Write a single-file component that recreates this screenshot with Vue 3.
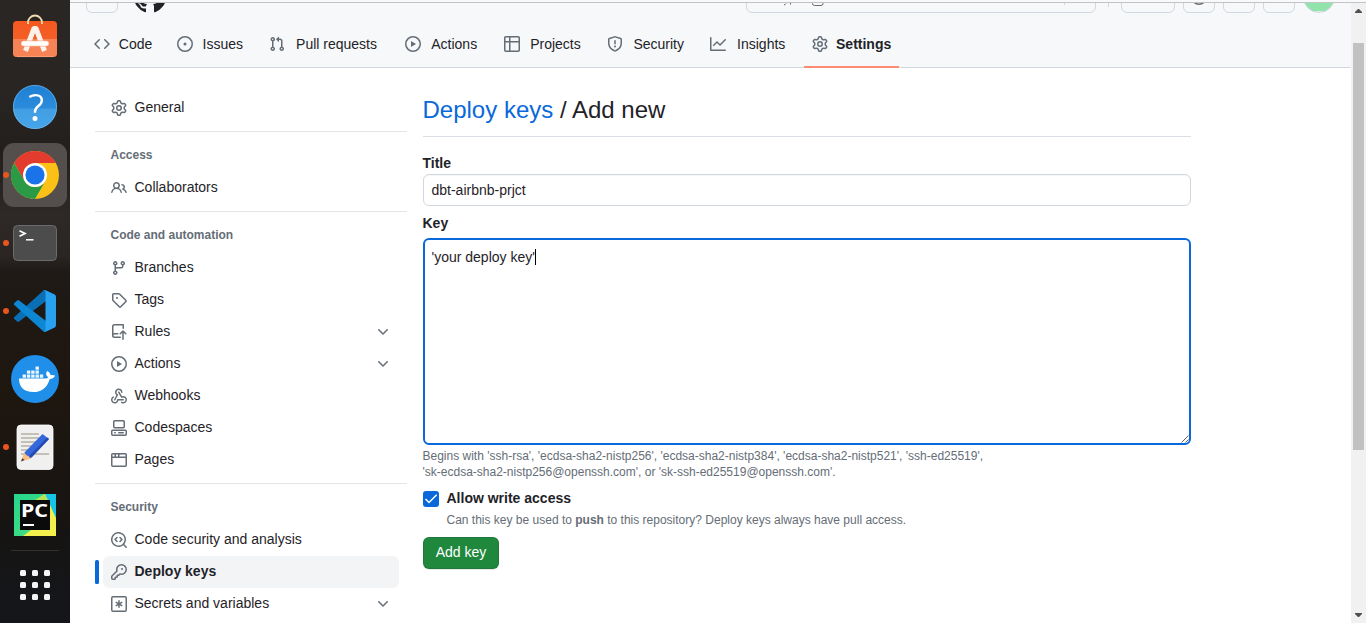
<script setup>
const icons = {
  code: 'm11.28 3.22 4.25 4.25a.75.75 0 0 1 0 1.06l-4.25 4.25a.749.749 0 0 1-1.275-.326.749.749 0 0 1 .215-.734L13.94 8l-3.72-3.72a.749.749 0 0 1 .326-1.275.749.749 0 0 1 .734.215Zm-6.56 0a.751.751 0 0 1 1.042.018.751.751 0 0 1 .018 1.042L2.06 8l3.72 3.72a.749.749 0 0 1-.326 1.275.749.749 0 0 1-.734-.215L.47 8.53a.75.75 0 0 1 0-1.06Z',
  issue: 'M8 9.5a1.5 1.5 0 1 0 0-3 1.5 1.5 0 0 0 0 3ZM8 0a8 8 0 1 1 0 16A8 8 0 0 1 8 0ZM1.5 8a6.5 6.5 0 1 0 13 0 6.5 6.5 0 0 0-13 0Z',
  pull: 'M1.5 3.25a2.25 2.25 0 1 1 3 2.122v5.256a2.251 2.251 0 1 1-1.5 0V5.372A2.25 2.25 0 0 1 1.5 3.25Zm5.677-.177L9.573.677A.25.25 0 0 1 10 .854V2.5h1A2.5 2.5 0 0 1 13.5 5v5.628a2.251 2.251 0 1 1-1.5 0V5a1 1 0 0 0-1-1h-1v1.646a.25.25 0 0 1-.427.177L7.177 3.427a.25.25 0 0 1 0-.354ZM3.75 2.5a.75.75 0 1 0 0 1.5.75.75 0 0 0 0-1.5Zm0 9.5a.75.75 0 1 0 0 1.5.75.75 0 0 0 0-1.5Zm8.25.75a.75.75 0 1 0 1.5 0 .75.75 0 0 0-1.5 0Z',
  play: 'M8 0a8 8 0 1 1 0 16A8 8 0 0 1 8 0ZM1.5 8a6.5 6.5 0 1 0 13 0 6.5 6.5 0 0 0-13 0Zm4.879-2.773 4.264 2.559a.25.25 0 0 1 0 .428l-4.264 2.559A.25.25 0 0 1 6 10.559V5.442a.25.25 0 0 1 .379-.215Z',
  table: 'M0 1.75C0 .784.784 0 1.75 0h12.5C15.216 0 16 .784 16 1.75v12.5A1.75 1.75 0 0 1 14.25 16H1.75A1.75 1.75 0 0 1 0 14.25ZM6.5 6.5v8h7.75a.25.25 0 0 0 .25-.25V6.5Zm8-1.5V1.75a.25.25 0 0 0-.25-.25H6.5V5Zm-13 1.5v7.75c0 .138.112.25.25.25H5v-8ZM5 5V1.5H1.75a.25.25 0 0 0-.25.25V5Z',
  shield: 'M7.467.133a1.748 1.748 0 0 1 1.066 0l5.25 1.68A1.75 1.75 0 0 1 15 3.48V7c0 1.566-.32 3.182-1.303 4.682-.983 1.498-2.585 2.813-5.032 3.855a1.697 1.697 0 0 1-1.33 0c-2.447-1.042-4.049-2.357-5.032-3.855C1.32 10.182 1 8.566 1 7V3.48a1.75 1.75 0 0 1 1.217-1.667Zm.61 1.429a.25.25 0 0 0-.153 0l-5.25 1.68a.25.25 0 0 0-.174.238V7c0 1.358.275 2.666 1.057 3.86.784 1.194 2.121 2.34 4.366 3.297a.196.196 0 0 0 .154 0c2.245-.956 3.582-2.104 4.366-3.298C13.225 9.666 13.5 8.36 13.5 7V3.48a.251.251 0 0 0-.174-.237l-5.25-1.68ZM8.75 4.75v3a.75.75 0 0 1-1.5 0v-3a.75.75 0 0 1 1.5 0ZM9 10.5a1 1 0 1 1-2 0 1 1 0 0 1 2 0Z',
  graph: 'M1.5 1.75V13.5h13.75a.75.75 0 0 1 0 1.5H.75a.75.75 0 0 1-.75-.75V1.75a.75.75 0 0 1 1.5 0Zm14.28 2.53-5.25 5.25a.75.75 0 0 1-1.06 0L7 7.06 4.28 9.78a.751.751 0 0 1-1.042-.018.751.751 0 0 1-.018-1.042l3.25-3.25a.75.75 0 0 1 1.06 0L10 7.94l4.72-4.72a.751.751 0 0 1 1.042.018.751.751 0 0 1 .018 1.042Z',
  gear: 'M8 0a8.2 8.2 0 0 1 .701.031C9.444.095 9.99.645 10.16 1.29l.288 1.107c.018.066.079.158.212.224.231.114.454.243.668.386.123.082.233.09.299.071l1.103-.303c.644-.176 1.392.021 1.82.63.27.385.506.792.704 1.218.315.675.111 1.422-.364 1.891l-.814.806c-.049.048-.098.147-.088.294.016.257.016.515 0 .772-.01.147.038.246.088.294l.814.806c.475.469.679 1.216.364 1.891a7.977 7.977 0 0 1-.704 1.217c-.428.61-1.176.807-1.82.63l-1.102-.302c-.067-.019-.177-.011-.3.071a5.909 5.909 0 0 1-.668.386c-.133.066-.194.158-.211.224l-.29 1.106c-.168.646-.715 1.196-1.458 1.26a8.006 8.006 0 0 1-1.402 0c-.743-.064-1.289-.614-1.458-1.26l-.289-1.106c-.018-.066-.079-.158-.212-.224a5.738 5.738 0 0 1-.668-.386c-.123-.082-.233-.09-.299-.071l-1.103.303c-.644.176-1.392-.021-1.82-.63a8.12 8.12 0 0 1-.704-1.218c-.315-.675-.111-1.422.363-1.891l.815-.806c.05-.048.098-.147.088-.294a6.214 6.214 0 0 1 0-.772c.01-.147-.038-.246-.088-.294l-.815-.806C.635 6.045.431 5.298.746 4.623a7.92 7.92 0 0 1 .704-1.217c.428-.61 1.176-.807 1.82-.63l1.102.302c.067.019.177.011.3-.071.214-.143.437-.272.668-.386.133-.066.194-.158.211-.224l.29-1.106C6.009.645 6.556.095 7.299.03 7.53.01 7.764 0 8 0Zm-.571 1.525c-.036.003-.108.036-.137.146l-.289 1.105c-.147.561-.549.967-.998 1.189-.173.086-.34.183-.5.29-.417.278-.97.423-1.529.27l-1.103-.303c-.109-.03-.175.016-.195.045-.22.312-.412.644-.573.99-.014.031-.021.11.059.19l.815.806c.411.406.562.957.53 1.456a4.709 4.709 0 0 0 0 .582c.032.499-.119 1.05-.53 1.456l-.815.806c-.081.08-.073.159-.059.19.162.346.353.677.573.989.02.03.085.076.195.046l1.102-.303c.56-.153 1.113-.008 1.53.27.161.107.328.204.501.29.447.222.85.629.997 1.189l.289 1.105c.029.109.101.143.137.146a6.6 6.6 0 0 0 1.142 0c.036-.003.108-.036.137-.146l.289-1.105c.147-.561.549-.967.998-1.189.173-.086.34-.183.5-.29.417-.278.97-.423 1.529-.27l1.103.303c.109.029.175-.016.195-.045.22-.313.411-.644.573-.99.014-.031.021-.11-.059-.19l-.815-.806c-.411-.406-.562-.957-.53-1.456a4.709 4.709 0 0 0 0-.582c-.032-.499.119-1.05.53-1.456l.815-.806c.081-.08.073-.159.059-.19a6.464 6.464 0 0 0-.573-.989c-.02-.03-.085-.076-.195-.046l-1.102.303c-.56.153-1.113.008-1.53-.27a4.44 4.44 0 0 0-.501-.29c-.447-.222-.85-.629-.997-1.189l-.289-1.105c-.029-.11-.101-.143-.137-.146a6.6 6.6 0 0 0-1.142 0ZM11 8a3 3 0 1 1-6 0 3 3 0 0 1 6 0ZM9.5 8a1.5 1.5 0 1 0-3.001.001A1.5 1.5 0 0 0 9.5 8Z',
  people: 'M2 5.5a3.5 3.5 0 1 1 5.898 2.549 5.508 5.508 0 0 1 3.034 4.084.75.75 0 1 1-1.482.235 4 4 0 0 0-7.9 0 .75.75 0 0 1-1.482-.236A5.507 5.507 0 0 1 3.102 8.05 3.493 3.493 0 0 1 2 5.5ZM11 4a3.001 3.001 0 0 1 2.22 5.018 5.01 5.01 0 0 1 2.56 3.012.749.749 0 0 1-.885.954.752.752 0 0 1-.549-.514 3.507 3.507 0 0 0-2.522-2.372.75.75 0 0 1-.574-.73v-.352a.75.75 0 0 1 .416-.672A1.5 1.5 0 0 0 11 5.5.75.75 0 0 1 11 4Zm-5.5-.5a2 2 0 1 0-.001 3.999A2 2 0 0 0 5.5 3.5Z',
  branch: 'M9.5 3.25a2.25 2.25 0 1 1 3 2.122V6A2.5 2.5 0 0 1 10 8.5H6a1 1 0 0 0-1 1v1.128a2.251 2.251 0 1 1-1.5 0V5.372a2.25 2.25 0 1 1 1.5 0v1.836A2.493 2.493 0 0 1 6 7h4a1 1 0 0 0 1-1v-.628A2.25 2.25 0 0 1 9.5 3.25Zm-6 0a.75.75 0 1 0 1.5 0 .75.75 0 0 0-1.5 0Zm8.25-.75a.75.75 0 1 0 0 1.5.75.75 0 0 0 0-1.5ZM4.25 12a.75.75 0 1 0 0 1.5.75.75 0 0 0 0-1.5Z',
  tag: 'M1 7.775V2.75C1 1.784 1.784 1 2.75 1h5.025c.464 0 .91.184 1.238.513l6.25 6.25a1.75 1.75 0 0 1 0 2.474l-5.026 5.026a1.75 1.75 0 0 1-2.474 0l-6.25-6.25A1.752 1.752 0 0 1 1 7.775Zm1.5 0c0 .066.026.13.073.177l6.25 6.25a.25.25 0 0 0 .354 0l5.025-5.025a.25.25 0 0 0 0-.354l-6.25-6.25a.25.25 0 0 0-.177-.073H2.75a.25.25 0 0 0-.25.25ZM6 5a1 1 0 1 1 0 2 1 1 0 0 1 0-2Z',
  repoPush: 'M1 2.5A2.5 2.5 0 0 1 3.5 0h8.75a.75.75 0 0 1 .75.75v3.5a.75.75 0 0 1-1.5 0V1.5h-8a1 1 0 0 0-1 1v6.708A2.493 2.493 0 0 1 3.5 9h3.25a.75.75 0 0 1 0 1.5H3.5a1 1 0 0 0 0 2h5.75a.75.75 0 0 1 0 1.5H3.5A2.5 2.5 0 0 1 1 11.5Zm13.23 7.79-1.48-1.484V15.25a.75.75 0 0 1-1.5 0V8.807L9.77 10.29a.75.75 0 1 1-1.06-1.061l2.505-2.504a1.1 1.1 0 0 1 1.57 0L15.29 9.23a.751.751 0 0 1-.018 1.042.751.751 0 0 1-1.042.018Z',
  webhook: 'M5.5 4.25a2.25 2.25 0 0 1 4.5 0 .75.75 0 0 0 1.5 0 3.75 3.75 0 1 0-6.14 2.889l-2.272 4.258a.75.75 0 0 0 1.324.706L7 7.25a.75.75 0 0 0-.309-1.015A2.25 2.25 0 0 1 5.5 4.25ZM7.364 3.607a.75.75 0 0 1 1.03.257l2.608 4.349a3.75 3.75 0 1 1-.628 6.785.75.75 0 0 1 .752-1.299 2.25 2.25 0 1 0-.033-3.88.75.75 0 0 1-1.03-.256L7.107 4.636a.75.75 0 0 1 .257-1.03ZM2.9 8.776A.75.75 0 0 1 2.625 9.8 2.25 2.25 0 1 0 6 11.75a.75.75 0 0 1 .75-.751h5.5a.75.75 0 0 1 0 1.5H7.425a3.751 3.751 0 1 1-5.55-3.998.75.75 0 0 1 1.024.274Z',
  codespaces: 'M0 11.25c0-.966.784-1.75 1.75-1.75h12.5c.966 0 1.75.784 1.75 1.75v3A1.75 1.75 0 0 1 14.25 16H1.75A1.75 1.75 0 0 1 0 14.25Zm2-9.5C2 .784 2.784 0 3.75 0h8.5C13.216 0 14 .784 14 1.75v5a1.75 1.75 0 0 1-1.75 1.75h-8.5A1.75 1.75 0 0 1 2 6.75Zm1.75-.25a.25.25 0 0 0-.25.25v5c0 .138.112.25.25.25h8.5a.25.25 0 0 0 .25-.25v-5a.25.25 0 0 0-.25-.25Zm-2 9.5a.25.25 0 0 0-.25.25v3c0 .138.112.25.25.25h12.5a.25.25 0 0 0 .25-.25v-3a.25.25 0 0 0-.25-.25ZM7 12.75a.75.75 0 0 1 .75-.75h4.5a.75.75 0 0 1 0 1.5h-4.5a.75.75 0 0 1-.75-.75Zm-4 0a.75.75 0 0 1 .75-.75h.5a.75.75 0 0 1 0 1.5h-.5a.75.75 0 0 1-.75-.75Z',
  browser: 'M0 2.75C0 1.784.784 1 1.75 1h12.5c.966 0 1.75.784 1.75 1.75v10.5A1.75 1.75 0 0 1 14.25 15H1.75A1.75 1.75 0 0 1 0 13.25ZM14.5 6h-13v7.25c0 .138.112.25.25.25h12.5a.25.25 0 0 0 .25-.25Zm-6-3.5v2h6V2.75a.25.25 0 0 0-.25-.25ZM5 2.5v2h2v-2Zm-3.25 0a.25.25 0 0 0-.25.25V4.5h2v-2Z',
  codescan: 'M8.47 4.97a.75.75 0 0 0 0 1.06L9.94 7.5 8.47 8.97a.75.75 0 1 0 1.06 1.06l2-2a.75.75 0 0 0 0-1.06l-2-2a.75.75 0 0 0-1.06 0ZM6.53 6.03a.75.75 0 0 0-1.06-1.06l-2 2a.75.75 0 0 0 0 1.06l2 2a.75.75 0 1 0 1.06-1.06L5.06 7.5l1.47-1.47ZM12.246 13.307a7.501 7.501 0 1 1 1.06-1.06l2.474 2.473a.749.749 0 0 1-.326 1.275.749.749 0 0 1-.734-.215ZM1.5 7.5a6.002 6.002 0 0 0 3.608 5.504 6.002 6.002 0 0 0 6.486-1.117.748.748 0 0 1 .292-.293A6 6 0 1 0 1.5 7.5Z',
  key: 'M10.5 0a5.499 5.499 0 1 1-1.288 10.848l-.932.932a.749.749 0 0 1-.53.22H7v.75a.749.749 0 0 1-.22.53l-.5.5a.749.749 0 0 1-.53.22H5v.75a.749.749 0 0 1-.22.53l-.5.5a.749.749 0 0 1-.53.22h-2A1.75 1.75 0 0 1 0 14.25v-2c0-.199.079-.389.22-.53l4.932-4.932A5.5 5.5 0 0 1 10.5 0Zm-4 5.5c-.001.431.069.86.205 1.269a.75.75 0 0 1-.181.768L1.5 12.56v1.69c0 .138.112.25.25.25h1.69l.06-.06v-1.19a.75.75 0 0 1 .75-.75h1.19l.06-.06v-1.19a.75.75 0 0 1 .75-.75h1.19l1.023-1.025a.75.75 0 0 1 .768-.18A4 4 0 1 0 6.5 5.5ZM11 6a1 1 0 1 1 0-2 1 1 0 0 1 0 2Z',
  asterisk: 'M0 2A2 2 0 0 1 2 0h12a2 2 0 0 1 2 2v12a2 2 0 0 1-2 2H2a2 2 0 0 1-2-2ZM2 1.5a.5.5 0 0 0-.5.5v12a.5.5 0 0 0 .5.5h12a.5.5 0 0 0 .5-.5V2a.5.5 0 0 0-.5-.5ZM7.25 4.200h1.5v2.500l2.150-1.250.750 1.300L9.500 8l2.150 1.250-.750 1.300-2.150-1.250v2.500h-1.500V9.300l-2.150 1.250-.750-1.300L6.500 8 4.350 6.750l.750-1.300 2.150 1.250Z',
  chevron: 'M12.78 5.22a.749.749 0 0 1 0 1.06l-4.25 4.25a.749.749 0 0 1-1.06 0L3.22 6.28a.749.749 0 1 1 1.06-1.06L8 8.939l3.72-3.719a.749.749 0 0 1 1.06 0Z',
  mark: 'M8 0c4.42 0 8 3.58 8 8a8.013 8.013 0 0 1-5.45 7.59c-.4.08-.55-.17-.55-.38 0-.27.01-1.13.01-2.2 0-.75-.25-1.23-.54-1.48 1.78-.2 3.65-.88 3.65-3.95 0-.88-.31-1.59-.82-2.15.08-.2.36-1.02-.08-2.12 0 0-.67-.22-2.2.82-.64-.18-1.32-.27-2-.27-.68 0-1.36.09-2 .27-1.53-1.03-2.2-.82-2.2-.82-.44 1.1-.16 1.92-.08 2.12-.51.56-.82 1.28-.82 2.15 0 3.06 1.86 3.75 3.64 3.95-.23.2-.44.55-.51 1.07-.46.21-1.61.55-2.33-.66-.15-.24-.6-.83-1.23-.82-.67.01-.27.38.01.53.34.19.73.9.82 1.13.16.45.68 1.31 2.69.94 0 .67.01 1.3.01 1.49 0 .21-.15.45-.55.38A7.995 7.995 0 0 1 0 8c0-4.42 3.58-8 8-8Z',
}

const tabs = [
  { label: 'Code', icon: 'code' },
  { label: 'Issues', icon: 'issue' },
  { label: 'Pull requests', icon: 'pull' },
  { label: 'Actions', icon: 'play' },
  { label: 'Projects', icon: 'table' },
  { label: 'Security', icon: 'shield' },
  { label: 'Insights', icon: 'graph' },
  { label: 'Settings', icon: 'gear', selected: true },
]

const groups = [
  { items: [{ label: 'General', icon: 'gear' }] },
  { title: 'Access', items: [{ label: 'Collaborators', icon: 'people' }] },
  {
    title: 'Code and automation',
    items: [
      { label: 'Branches', icon: 'branch' },
      { label: 'Tags', icon: 'tag' },
      { label: 'Rules', icon: 'repoPush', more: true },
      { label: 'Actions', icon: 'play', more: true },
      { label: 'Webhooks', icon: 'webhook' },
      { label: 'Codespaces', icon: 'codespaces' },
      { label: 'Pages', icon: 'browser' },
    ],
  },
  {
    title: 'Security',
    items: [
      { label: 'Code security and analysis', icon: 'codescan' },
      { label: 'Deploy keys', icon: 'key', active: true },
      { label: 'Secrets and variables', icon: 'asterisk', more: true },
    ],
  },
]
</script>

<template>
  <div class="screen">
    <aside class="dock">
      <div class="app">
        <svg width="64" height="64" viewBox="3 7 64 64">
          <defs>
            <linearGradient id="bag" x1="0" y1="0" x2="0" y2="1"><stop offset="0" stop-color="#f4581f" /><stop offset="1" stop-color="#f2662f" /></linearGradient>
          </defs>
          <rect x="13" y="21" width="44" height="36" rx="4" fill="url(#bag)" />
          <path d="M13 39h44v14a4 4 0 0 1-4 4H17a4 4 0 0 1-4-4Z" fill="#f58355" />
          <path d="M17 56.6h36" stroke="#f9a583" stroke-width=".8" />
          <path d="M28 24v-1.5a7 7 0 0 1 14 0V24" fill="none" stroke="#f3dcae" stroke-width="1.8" />
          <path d="M25.5 51 34 28.5h2L44.500 51" fill="none" stroke="#fdf1ec" stroke-width="5" stroke-linejoin="round" />
          <rect x="21" y="40.800" width="28" height="5.400" rx="2.700" fill="#fff" stroke="#f58355" stroke-width=".5" />
        </svg>
      </div>
      <div class="app">
        <svg width="64" height="64" viewBox="3 75 64 64">
          <defs>
            <linearGradient id="help" x1="0" y1="0" x2="0" y2="1"><stop offset="0" stop-color="#1f7fd4" /><stop offset=".53" stop-color="#2b8cdc" /><stop offset=".54" stop-color="#429ee2" /><stop offset="1" stop-color="#45a5ea" /></linearGradient>
          </defs>
          <circle cx="35" cy="107" r="22" fill="url(#help)" />
          <circle cx="35" cy="107" r="21.600" fill="none" stroke="#7fc0ee" stroke-width=".6" />
          <path d="M29.300 97c2-1.300 4.200-1.900 6.200-1.900 4.200 0 6.300 2.100 6.300 5.300 0 5.400-6.800 5.800-6.800 11v1.400" fill="none" stroke="#fff" stroke-width="2.400" />
          <circle cx="35" cy="118.500" r="2.500" fill="#fff" />
        </svg>
      </div>
      <div class="app current running">
        <svg width="64" height="64" viewBox="3 143 64 64">
          <circle cx="35" cy="175" r="24" fill="#fbc116" />
          <path d="M14.200 163A24 24 0 0 1 55.800 163H35L24.600 181Z" fill="#e33b2e" />
          <path d="M14.200 163A24 24 0 0 0 35 199L45.400 181A12 12 0 0 1 24.600 181Z" fill="#2a9a47" />
          <circle cx="35" cy="175" r="12" fill="#fff" />
          <circle cx="35" cy="175" r="9.600" fill="#1a73e8" />
        </svg>
      </div>
      <div class="app running">
        <svg width="64" height="64" viewBox="3 211 64 64">
          <rect x="13.500" y="225.500" width="43" height="35" rx="4" fill="#4c4c4c" stroke="#6c6c6c" />
          <path d="m19.500 230.800 5.500 2.700-5.500 2.700" fill="none" stroke="#fff" stroke-width="1.700" />
          <path d="M26 239.800h7.500" stroke="#fff" stroke-width="1.500" />
        </svg>
      </div>
      <div class="app running">
        <svg width="42" height="42" viewBox="0 0 100 100">
          <path fill="#0a6fb5" d="M96.500 10.800 75.900.9a6.200 6.200 0 0 0-7.100 1.200L1.400 63.600a4.200 4.200 0 0 0 0 6.100l5.500 5a4.200 4.200 0 0 0 5.300.3L93.400 13.300c2.700-2 6.600-.1 6.600 3.300Z" />
          <path fill="#0d86d3" d="M96.500 89.200 75.900 99.100a6.200 6.200 0 0 1-7.100-1.200L1.400 36.400a4.200 4.200 0 0 1 0-6.100l5.500-5a4.200 4.200 0 0 1 5.300-.3l81.200 61.700c2.700 2 6.600.1 6.600-3.300Z" />
          <path fill="#27a1f0" d="M75.900 99.100a6.200 6.200 0 0 1-7.100-1.200 3.700 3.700 0 0 0 6.200-2.600V4.700a3.700 3.700 0 0 0-6.200-2.600 6.200 6.200 0 0 1 7.100-1.200l20.600 9.900a6.300 6.300 0 0 1 3.500 5.600v67.200a6.300 6.300 0 0 1-3.500 5.600Z" />
        </svg>
      </div>
      <div class="app">
        <svg width="64" height="64" viewBox="3 347 64 64">
          <circle cx="35" cy="379" r="24" fill="#1f8fea" />
          <path fill="#fff" d="M19 378.500h26c1.700 0 2.800-.5 3.300-1.300-2.400-1.500-2.900-3.700-1.200-6.200 2.200 1 3.200 2.500 3.400 4.100 1.900-.4 3.400-.2 4.600.6-.9 2-2.700 3.200-5.300 3.200-2.700 8.500-8 13.100-16.500 13.100-9.500 0-14.300-5-14.300-13.500Z" />
          <path fill="#e9f4fd" d="M22.600 374.400h3.400v3.400h-3.400ZM26.900 374.400h3.400v3.400h-3.400ZM31.200 374.400h3.400v3.400h-3.400ZM35.500 374.400h3.400v3.400h-3.400ZM39.800 374.400h3.400v3.400h-3.400ZM26.900 370.400h3.400v3.400h-3.400ZM31.200 370.400h3.400v3.400h-3.400ZM35.500 370.400h3.400v3.400h-3.400ZM35.500 366.400h3.400v3.400h-3.400Z" />
        </svg>
      </div>
      <div class="app running">
        <svg width="64" height="64" viewBox="3 415 64 64">
          <rect x="17" y="425" width="36" height="44.500" rx="4" fill="#f0f0f0" stroke="#fff" stroke-width=".8" />
          <path d="M21 434h18M21 438h21M21 442h17M21 446h14M21 450h11M21 454h28" stroke="#c4c0b6" stroke-width="1.800" />
          <path d="M21 461.500 24.500 452l7 6.500Z" fill="#f6bd84" />
          <path d="M21 461.500l1.300-3.300 2.200 1.900Z" fill="#3b3b3b" />
          <path d="m24.500 452.500 18-18.500 6.500 5-17.500 18.500c-1.300.3-2.300-.2-2.700-1.600-1.800 0-3.300-1.300-4.300-3.400Z" fill="#3568dc" />
          <path d="m29 456 18.300-18.600 1.700 1.600-17.500 18.500c-1.300.3-2.100-.3-2.500-1.500Z" fill="#254bb0" />
        </svg>
      </div>
      <div class="app">
        <svg width="64" height="64" viewBox="3 483 64 64">
          <defs>
            <linearGradient id="pc" x1="0" y1="0" x2="1" y2="1"><stop offset="0" stop-color="#25d78c" /><stop offset="1" stop-color="#4ddf7c" /></linearGradient>
          </defs>
          <rect x="14" y="494" width="42" height="42" fill="url(#pc)" />
          <path d="M45 494h11v24l-10-4Z" fill="#14c5e6" />
          <path d="M34 501 45 494 56 518v18H23l8-6Z" fill="#f3ef4d" />
          <path d="M34 501 45 494l2 6Z" fill="#b6e35c" />
          <rect x="20" y="500" width="30" height="30" fill="#0b0b0b" />
          <rect x="23" y="524" width="11" height="2" fill="#fff" />
          <text x="21" y="517" class="pc" textLength="27" lengthAdjust="spacingAndGlyphs">PC</text>
        </svg>
      </div>
      <div class="rule"></div>
      <div class="grid"><i v-for="n in 9" :key="n"></i></div>
    </aside>

    <div class="browser">
      <div class="edge"></div>
      <div class="window">
        <div class="page">
          <header class="header">
            <div class="topbar">
              <div class="box sq"></div>
              <svg class="mark" width="32" height="32" viewBox="0 0 16 16"><path :d="icons.mark" /></svg>
              <div class="box search">
                <svg width="350" height="32" viewBox="0 0 350 32">
                  <path d="M40 22.600q-.7 1.400-2 1.200M44.500 23.500v-2" stroke="#656d76" fill="none" />
                  <path d="M66.500 20v2.500q0 2 2 2h6.500q2 0 2-2V20" fill="none" stroke="#656d76" />
                  <path d="M318.500 8v16" stroke="#d0d7de" />
                </svg>
              </div>
              <div class="sep"></div>
              <div class="box wide"></div>
              <div class="box sq"><svg width="16" height="16" viewBox="0 0 16 16"><path :d="icons.issue" /></svg></div>
              <div class="box sq"></div>
              <div class="box sq"></div>
              <div class="avatar"></div>
            </div>
            <nav class="tabs">
              <a v-for="t in tabs" :key="t.label" class="tab" :class="{ selected: t.selected }">
                <svg class="icon" width="16" height="16" viewBox="0 0 16 16"><path :d="icons[t.icon]" /></svg>
                <span class="label" :data-label="t.label">{{ t.label }}</span>
              </a>
            </nav>
          </header>

          <div class="body">
            <nav class="side">
              <section v-for="(g, i) in groups" :key="i" class="group">
                <h3 v-if="g.title">{{ g.title }}</h3>
                <a v-for="it in g.items" :key="it.label" class="item" :class="{ active: it.active }">
                  <svg class="icon" width="16" height="16" viewBox="0 0 16 16"><path :d="icons[it.icon]" fill-rule="evenodd" /></svg>
                  <span>{{ it.label }}</span>
                  <svg v-if="it.more" class="icon more" width="16" height="16" viewBox="0 0 16 16"><path :d="icons.chevron" /></svg>
                </a>
              </section>
            </nav>

            <main class="main">
              <h2><a>Deploy keys</a> / Add new</h2>
              <label class="field-label">Title</label>
              <div class="input">dbt-airbnb-prjct</div>
              <label class="field-label key-label">Key</label>
              <div class="area">
                <span class="typed">'your deploy key'</span>
                <svg class="grip" width="8" height="8" viewBox="0 0 8 8"><path d="M.5 7.500 7.500.5M4.500 7.500l3-3" stroke="#555" stroke-width=".9" /></svg>
              </div>
              <p class="note">
                Begins with 'ssh-rsa', 'ecdsa-sha2-nistp256', 'ecdsa-sha2-nistp384', 'ecdsa-sha2-nistp521', 'ssh-ed25519',<br />'sk-ecdsa-sha2-nistp256@openssh.com', or 'sk-ssh-ed25519@openssh.com'.
              </p>
              <div class="check-row">
                <span class="check"><svg width="16" height="16" viewBox="0 0 16 16"><path d="m2.500 8 3.500 3.500 7.700-7.700" /></svg></span>
                <div>
                  <label class="check-label">Allow write access</label>
                  <p class="hint">Can this key be used to <b>push</b> to this repository? Deploy keys always have pull access.</p>
                </div>
              </div>
              <button class="submit" type="button">Add key</button>
            </main>
          </div>
        </div>
        <div class="scrollbar">
          <svg width="7" height="4" viewBox="0 0 7 4"><path d="M0 4V3L3 0h1l3 3v1Z" /></svg>
          <div class="thumb"></div>
          <svg class="down" width="7" height="4" viewBox="0 0 7 4"><path d="M0 0v1l3 3h1l3-3V0Z" /></svg>
        </div>
      </div>
    </div>
  </div>
</template>

<style>
html, body { margin: 0; overflow: hidden; background: #fff; }
</style>

<style scoped>
* { box-sizing: border-box; }
svg { display: block; flex: none; }
h2, h3, p { margin: 0; }

.screen {
  display: flex;
  width: 1366px;
  height: 623px;
  overflow: hidden;
  font-family: "Liberation Sans", Arial, sans-serif;
  font-size: 14px;
  line-height: 21px;
  color: #1f2328;
}

.dock {
  width: 70px;
  flex: none;
  display: flex;
  flex-direction: column;
  align-items: center;
  padding-top: 5px;
  background: linear-gradient(#2a2624 0, #292523 90px, #231f1d 150px, #2e2926 215px, #2b2624 255px, #1e1a17 272px, #1f1812 330px, #1e1710 400px, #1a1511 470px, #161412 530px, #14161a 600px, #14161a 620px);
}
.app {
  position: relative;
  width: 64px;
  height: 64px;
  margin: 2px 0;
  flex: none;
  display: flex;
  align-items: center;
  justify-content: center;
  border-radius: 11px;
}
.current { background: #544f4c; }
.running::before {
  content: "";
  position: absolute;
  left: 0;
  top: 29px;
  width: 6px;
  height: 6px;
  border-radius: 50%;
  background: #e95420;
}
.pc { font-family: "Noto Sans", "Open Sans", sans-serif; font-weight: 700; font-size: 18.500px; fill: #fff; }
.rule { width: 48px; height: 1px; background: #33312f; flex: none; margin-top: 1px; }
.grid { display: grid; grid-template-columns: repeat(3, 6px); gap: 6px; margin-top: 19px; }
.grid i { height: 6px; border-radius: 1.500px; background: #f4f4f4; }

.browser { width: 1296px; display: flex; flex-direction: column; }
.edge { height: 3px; flex: none; background: #f8f9fa; border-bottom: 1px solid #c3c3c3; }
.window { flex: 1; display: flex; min-height: 0; }
.page { width: 1281px; overflow: hidden; }

.header { background: #f6f8fa; height: 65px; box-shadow: inset 0 -1px #d0d7de; }
.topbar {
  height: 10px;
  display: flex;
  align-items: flex-end;
  gap: 8px;
  padding: 0 16px;
  overflow: hidden;
}
.box { height: 32px; border: 1px solid #d0d7de; border-radius: 6px; flex: none; display: flex; align-items: center; justify-content: center; }
.box svg { fill: #656d76; }
.sq { width: 32px; }
.wide { width: 54px; }
.mark { fill: #1f2328; margin-left: 8px; }
.search { width: 350px; margin-left: auto; }
.sep { width: 1px; height: 26px; margin: 0 4px 6px; background: #d0d7de; }
.avatar { width: 32px; height: 32px; flex: none; border-radius: 50%; border: 1px solid #d0d7de; background: linear-gradient(#8fe3ab 29px, #e3f3ea 29px); }

.tabs { display: flex; gap: 8px; padding: 7px 16px 0; }
.tab { display: flex; align-items: center; gap: 8px; height: 48px; padding: 2px 8px 0; border-bottom: 2px solid transparent; }
.selected { border-color: #fd8c73; font-weight: 700; }
.icon { fill: #656d76; }
.label { line-height: 20px; text-align: center; }
.label::before { content: attr(data-label); display: block; height: 0; overflow: hidden; visibility: hidden; font-weight: 700; }

.body { display: flex; gap: 16px; padding: 24px 0 0 24.500px; }
.side { width: 312px; flex: none; }
.group { padding: 0 8px; }
.group + .group { border-top: 1px solid #e3e6e9; margin-top: 7px; padding-top: 8px; }
h3 { height: 32px; padding: 5px 8px; font-size: 12px; line-height: 20px; color: #656d76; }
.item { position: relative; display: flex; align-items: center; gap: 8px; height: 32px; padding: 0 8px; }
.item span { line-height: 20px; margin-top: -2px; }
.more { margin-left: auto; }
.active { background: #f3f4f6; border-radius: 6px; font-weight: 700; }
.active::before { content: ""; position: absolute; left: -8px; top: 4px; width: 4px; height: 24px; background: #0969da; border-radius: 1.500px; }

.main { width: 768px; display: flex; flex-direction: column; align-items: flex-start; }
h2 { width: 100%; height: 45px; margin-bottom: 16px; font-size: 24px; line-height: 36px; font-weight: 400; border-bottom: 1px solid #d8dee4; }
h2 a { color: #0969da; }
.field-label { font-weight: 700; height: 21px; }
.input { width: 100%; height: 32px; padding: 5px 8px; line-height: 20px; border: 1px solid #d0d7de; border-radius: 6px; box-shadow: inset 0 1px rgba(208, 215, 222, .2); }
.key-label { margin: 7px 0 4px; }
.area { position: relative; width: 100%; height: 207px; padding: 7px 7px; border: 2px solid #0969da; border-radius: 6px; }
.typed { display: inline-block; border-right: 1px solid #000; height: 16px; line-height: 16px; margin-top: 2px; vertical-align: top; }
.grip { position: absolute; right: 0; bottom: 0; }
.note { margin-top: 3px; font-size: 12px; line-height: 16px; color: #656d76; white-space: nowrap; }
.check-row { display: flex; gap: 8px; margin-top: 7px; }
.check { width: 16px; height: 16px; margin-top: 4px; flex: none; border-radius: 3px; background: #0969da; }
.check path { fill: none; stroke: #fff; stroke-width: 1.500; }
.check-label { display: block; font-weight: 700; line-height: 21px; margin-top: 1px; }
.hint { font-size: 12px; line-height: 18px; margin-top: 2px; color: #656d76; }
.submit {
  width: 76px;
  height: 32px;
  margin-top: 8px;
  padding: 0 0 2px 1px;
  font: 14px "Liberation Sans", Arial, sans-serif;
  color: #fff;
  background: #1f883d;
  border: 1px solid rgba(31, 35, 40, .15);
  border-radius: 6px;
  box-shadow: 0 1px 0 rgba(31, 35, 40, .1);
}

.scrollbar { width: 15px; background: #f1f1f1; display: flex; flex-direction: column; align-items: center; padding: 6px 2px; }
.scrollbar svg { fill: #505050; }
.thumb { width: 11px; height: 407px; margin-top: 30px; background: #c1c1c1; }
.down { margin-top: auto; }
</style>
